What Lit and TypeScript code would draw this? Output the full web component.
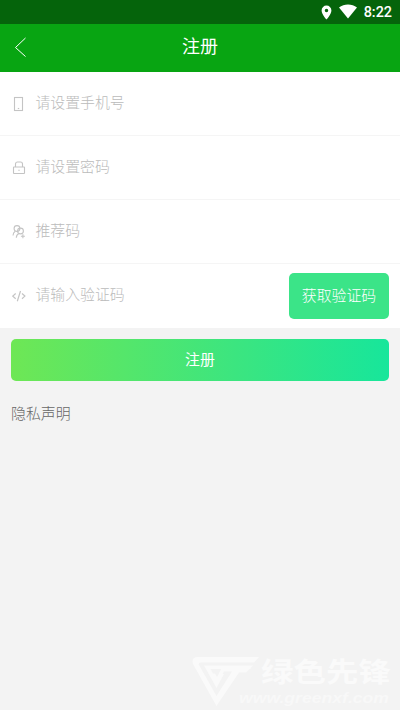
import { LitElement, html, svg, css } from "lit";
import { customElement } from "lit/decorators.js";

const icons: Record<string, unknown> = {
  phone: svg`<rect x="2.5" y="1.5" width="8" height="13"/><path d="M5.800 12.500h1.400"/>`,
  lock: svg`<path d="M3.500 7V4a2 2 0 0 1 2-2h3a2 2 0 0 1 2 2v3"/><rect x="1.500" y="7" width="11" height="6.500" rx=".5"/><path d="M6.300 10.300h1.400"/>`,
  people: svg`<circle cx="5" cy="4.500" r="2.900"/><circle cx="8.500" cy="7" r="2.900"/><path d="M1 11.500c.1-2 .9-3.400 2.200-4.300M4.300 13.700c.1-2.300 1.100-3.700 2.600-4.300M10.900 10.300v4M8.900 12.300h4"/>`,
  code: svg`<path stroke-width="1.200" d="M3.700 5.500.8 8.100l2.900 2.600M10 5.500l2.900 2.600-2.900 2.600M8.500 3 5.300 13.200"/>`,
};

const fields = [
  { icon: "phone", label: "请设置手机号" },
  { icon: "lock", label: "请设置密码" },
  { icon: "people", label: "推荐码" },
  { icon: "code", label: "请输入验证码" },
];

@customElement("app-root")
export class AppRoot extends LitElement {
  static styles = css`
    :host {
      display: flex;
      flex-direction: column;
      position: relative;
      height: 710px;
      overflow: hidden;
      background: #f3f3f3;
      font-family: "Noto Sans CJK SC", sans-serif;
      font-size: 14.9px;
      font-weight: 300;
    }
    svg { display: block; flex: none; }
    .status {
      height: 24px;
      flex: none;
      display: flex;
      align-items: center;
      justify-content: flex-end;
      padding-right: 8px;
      background: #05640b;
      color: #fff;
      font: 500 14.4px Roboto, sans-serif;
    }
    .pin { margin-right: 7px; }
    .wifi { margin: -2px 7px 0 0; }
    .header {
      height: 48px;
      flex: none;
      display: grid;
      grid-template-columns: 40px 1fr 40px;
      align-items: center;
      background: #08a512;
      color: #fff;
    }
    .back { margin: -3px 0 0 14px; }
    .title {
      font-size: 18px;
      font-weight: 400;
      line-height: 26px;
      text-align: center;
      margin-top: -6px;
    }
    .row {
      height: 64px;
      box-sizing: border-box;
      display: flex;
      align-items: center;
      padding: 0 11px 0 12px;
      background: #fff;
      border-bottom: 1px solid #f5f5f5;
      color: #bbb;
    }
    .row:last-child { border-bottom-color: #fff; }
    .icon {
      fill: none;
      stroke: #c4c4c4;
      stroke-width: 1.1;
      margin-right: 8.4px;
    }
    .label { flex: 1; line-height: 22px; margin-top: -4px; }
    .code {
      width: 100px;
      height: 46px;
      box-sizing: border-box;
      border-radius: 5px;
      background: #3be488;
      color: #fff;
      line-height: 43px;
      text-align: center;
    }
    .submit {
      margin: 11px 11px 0;
      height: 42px;
      flex: none;
      border-radius: 5px;
      background: linear-gradient(90deg, #6ee755, #3be580 60%, #17e69b);
      color: #fff;
      font-weight: 400;
      line-height: 39px;
      text-align: center;
    }
    .privacy { margin: 21px 11px 0; line-height: 22px; color: #666; }
    .mark { position: absolute; left: 190px; top: 650px; fill: #fafafa; }
    .brand { font: 700 27px "Noto Sans CJK SC", sans-serif; }
    .site { font: italic 700 14px "Liberation Sans", sans-serif; fill: #f8f8f8; }
  `;

  render() {
    return html`
      <div class="status">
        <svg class="pin" width="11" height="15" viewBox="0 0 11 15"><path fill="#fff" fill-rule="evenodd" d="M5.500.5A4.900 4.900 0 0 0 .6 5.400C.6 9 5.500 14.500 5.500 14.500S10.400 9 10.400 5.400A4.900 4.900 0 0 0 5.500.5zm0 3.200a1.750 1.750 0 1 1 0 3.500 1.750 1.750 0 0 1 0-3.500z"/></svg>
        <svg class="wifi" width="18" height="15" viewBox="0 0 18 15"><path fill="#fff" d="M0 3.500C5-.5 13-.5 18 3.500L9 14.500z"/></svg>
        <span>8:22</span>
      </div>
      <div class="header">
        <svg class="back" width="13" height="20" viewBox="0 0 13 20"><path d="M11.500 1 1.500 10.500l10 9" fill="none" stroke="#fff" stroke-width="1"/></svg>
        <div class="title">注册</div>
      </div>
      <div>
        ${fields.map(
          (f) => html`<div class="row">
            <svg class="icon" width="15" height="16" viewBox="0 0 15 16">${icons[f.icon]}</svg>
            <span class="label">${f.label}</span>
            ${f.icon === "code" ? html`<div class="code">获取验证码</div>` : ""}
          </div>`
        )}
      </div>
      <div class="submit">注册</div>
      <div class="privacy">隐私声明</div>
      <svg class="mark" width="210" height="60" viewBox="0 0 210 60">
        <path d="M7 7H69L64 12.500H11Q8 12.500 9 15L26.500 46 42 21.500H34L26.500 34 20.500 23.500H25L27 27 32 17.500H61L56 22.500H49L26.500 56 3 14Q1 8 7 7z"/>
        <path d="M14 15.500H63L60 19H20.500L26.500 30 30 24H34L26.500 38z"/>
        <text class="brand" x="71" y="32" textLength="130" lengthAdjust="spacingAndGlyphs">绿色先锋</text>
        <text class="site" x="49" y="52.500" textLength="150" lengthAdjust="spacingAndGlyphs">www.greenxf.com</text>
      </svg>
    `;
  }
}
